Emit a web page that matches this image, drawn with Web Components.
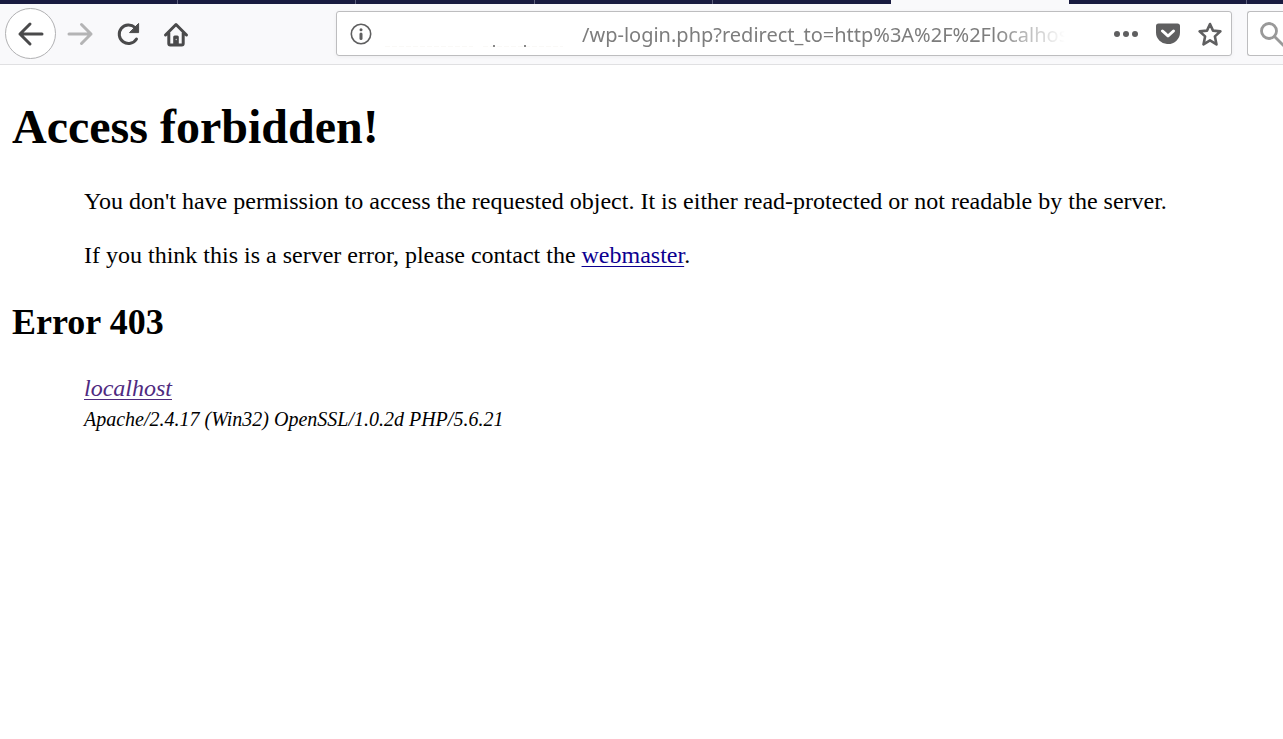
<!DOCTYPE html>
<html lang="en">
<head>
<meta charset="utf-8">
<title>Access forbidden!</title>
<style>
  body { margin: 0; background: #fff; color: #000; font-family: "Liberation Serif", "Times New Roman", serif; }
</style>
</head>
<body>
<browser-tabs></browser-tabs>
<browser-toolbar>
  <nav-button label="Back" kind="back"></nav-button>
  <nav-button label="Forward" kind="forward"></nav-button>
  <nav-button label="Reload" kind="reload"></nav-button>
  <nav-button label="Home" kind="home"></nav-button>
  <url-bar slot="fields"></url-bar>
  <search-bar slot="fields"></search-bar>
</browser-toolbar>
<error-page></error-page>

<script>
const define = (name, html, setup) => {
  const template = document.createElement('template');
  template.innerHTML = html;
  customElements.define(name, class extends HTMLElement {
    constructor() {
      super();
      this.attachShadow({ mode: 'open' }).append(template.content.cloneNode(true));
    }
    connectedCallback() { if (setup) setup(this, this.shadowRoot); }
  });
};

define('browser-tabs', `
  <style>
    :host { display: grid; grid-template-columns: repeat(7, 5fr) 1fr; height: 4px; background: #191b40; }
    span { border-right: 1px solid #5d5f7c; }
    .plain { border: 0; }
    .active { background: #f9f9fb; border: 0; }
  </style>
  <span></span><span></span><span></span><span></span><span class="plain"></span>
  <span class="active"></span><span></span><span class="plain"></span>`);

define('browser-toolbar', `
  <style>
    :host { display: flex; align-items: center; height: 59px; padding: 0 0 1px 5px; overflow: hidden;
            background: #f9f9fb; border-bottom: 1px solid #e0e0e2; }
    nav { display: flex; align-items: center; margin-right: 136px; }
    .fields { flex: 1; min-width: 0; display: flex; gap: 15px; }
  </style>
  <nav aria-label="Browser"><slot></slot></nav>
  <div class="fields"><slot name="fields"></slot></div>`);

const icons = {
  back: '<path d="M27 16H5M15 6L5 16L15 26"/>',
  forward: '<path d="M5 16h22M17.500 6.500L27 16l-9.500 9.500"/>',
  reload: '<path d="M24.500 21A9.300 9.300 0 1 1 23 9.500"/><path d="M26.600 5.800v8.800h-8.700z" fill="currentColor" stroke-width="1"/>',
  home: '<path d="M5.500 17L16 6.500l10.500 10.500M8.800 15v10.500q0 1.500 1.500 1.500h11.400q1.500 0 1.500-1.500V15" stroke-width="3"/><path d="M13.200 26.500V19q0-1.500 1.500-1.500h2.600q1.500 0 1.500 1.500v7.500z" fill="currentColor" stroke="none"/><circle cx="16.300" cy="21.500" r=".8" fill="#b8b8ba" stroke="none"/>'
};

define('nav-button', `
  <style>
    :host { display: block; color: #4a4a4b; }
    :host([kind="forward"]) { color: #b4b4b5; }
    button { display: grid; place-items: center; box-sizing: border-box; width: 48px; height: 48px;
             padding: 0; border: 0; background: none; color: inherit; }
    :host([kind="back"]) button { width: 51px; height: 51px; border: 1px solid #b1b1b3; border-radius: 50%; background: #fff; }
    svg { width: 32px; height: 32px; fill: none; stroke: currentColor; stroke-width: 3; stroke-linecap: round; stroke-linejoin: round; }
  </style>
  <button type="button"><svg viewBox="0 0 32 32" aria-hidden="true"></svg></button>`,
  (host, root) => {
    root.querySelector('button').setAttribute('aria-label', host.getAttribute('label'));
    root.querySelector('svg').innerHTML = icons[host.getAttribute('kind')];
  });

define('url-bar', `
  <style>
    :host { flex: 1; min-width: 0; box-sizing: border-box; height: 45px; display: flex; align-items: center;
            border: 1px solid #bdbdbf; border-radius: 3px; background: #fff; box-shadow: 0 1px 4px #0000000d; }
    button { display: grid; place-items: center; width: 42px; height: 42px; padding: 0; border: 0; background: none; color: #5f5f60; flex: none; }
    .info { width: 48px; }
    svg { display: block; }
    .host { flex: none; width: 197px; height: 42px; }
    input { flex: 1; min-width: 0; height: 42px; padding: 1px 0 0; border: 0; outline: 0; background: none; color: #7d7d7d;
            font: 20px "Noto Sans", sans-serif; }
    .text { flex: 1; min-width: 0; display: flex; margin-right: 40px;
            -webkit-mask-image: linear-gradient(to left, transparent, #000 72px); mask-image: linear-gradient(to left, transparent, #000 72px); }
  </style>
  <button type="button" class="info" aria-label="Site information">
    <svg width="24" height="24" viewBox="0 0 24 24" fill="none" stroke="currentColor"><circle cx="12" cy="12" r="9.700" stroke-width="1.600"/><circle cx="12" cy="7.700" r="1.500" fill="currentColor" stroke="none"/><path d="M12 12v4.500" stroke-width="3" stroke-linecap="round"/></svg>
  </button>
  <svg class="host" viewBox="0 0 197 42" aria-hidden="true"><path d="M0 33.500h88M98 33.500h80" stroke="#faf9f7" stroke-dasharray="5 2"/><path d="M108 33h2M139 33h2" stroke="#888" stroke-width="2"/></svg>
  <div class="text"><input type="text" aria-label="Address" value="/wp-login.php?redirect_to=http%3A%2F%2Flocalhos"></div>
  <button type="button" aria-label="Page actions"><svg width="26" height="8" viewBox="0 0 26 8" fill="currentColor"><circle cx="4" cy="4" r="3"/><circle cx="13" cy="4" r="3"/><circle cx="22" cy="4" r="3"/></svg></button>
  <button type="button" aria-label="Save to Pocket"><svg width="26" height="24" viewBox="0 0 26 24"><path d="M3.500 1.500h19q2.500 0 2.500 2.500v6.500a12 11.500 0 0 1-24 0V4q0-2.500 2.500-2.500z" fill="currentColor"/><path d="M7.500 9l5.500 5 5.500-5" fill="none" stroke="#fff" stroke-width="3" stroke-linecap="round" stroke-linejoin="round"/></svg></button>
  <button type="button" aria-label="Bookmark this page"><svg width="26" height="26" viewBox="0 0 26 26" fill="none" stroke="currentColor" stroke-width="2.600" stroke-linejoin="round"><path d="M13 3l3 6.600 7.400.8-5.500 5 1.600 8-6.500-4-6.500 4 1.600-8-5.500-5 7.400-.8z"/></svg></button>`);

define('search-bar', `
  <style>
    :host { flex: 0 0 36px; box-sizing: border-box; height: 45px; display: flex; align-items: center; overflow: hidden;
            padding-left: 12px; border: 1px solid #bdbdbf; border-right: 0; border-radius: 3px 0 0 3px; background: #fff; }
    svg { display: block; flex: none; }
  </style>
  <svg width="26" height="26" viewBox="0 0 26 26" fill="none" stroke="#999" stroke-width="2.800" stroke-linecap="round" role="img" aria-label="Search"><circle cx="9" cy="10" r="7.500"/><path d="M14.500 15.500l9 9"/></svg>`);

define('error-page', `
  <style>
    :host { display: block; padding: 34px 12px 0; font-size: 24px; line-height: 28px; }
    h1, h2, p, address { margin: 0; }
    h1 { font-size: 48px; line-height: 56px; margin-bottom: 32px; }
    h2 { font-size: 36px; line-height: 40px; margin: 33px 0 32px; }
    .body { display: grid; gap: 26px; padding: 0 72px; }
    address { display: grid; gap: 5px; padding: 0 72px; justify-items: start; }
    small { font-size: 20px; line-height: 24px; }
    a { color: #0c0090; text-decoration-thickness: 1px; text-underline-offset: 3px; }
    address a { color: #4f2a7f; }
  </style>
  <main>
    <h1>Access forbidden!</h1>
    <div class="body">
      <p>You don't have permission to access the requested object. It is either read-protected or not readable by the server.</p>
      <p>If you think this is a server error, please contact the <a href="#webmaster">webmaster</a>.</p>
    </div>
    <h2>Error 403</h2>
    <address><a href="#localhost">localhost</a><small>Apache/2.4.17 (Win32) OpenSSL/1.0.2d PHP/5.6.21</small></address>
  </main>`);
</script>
</body>
</html>
